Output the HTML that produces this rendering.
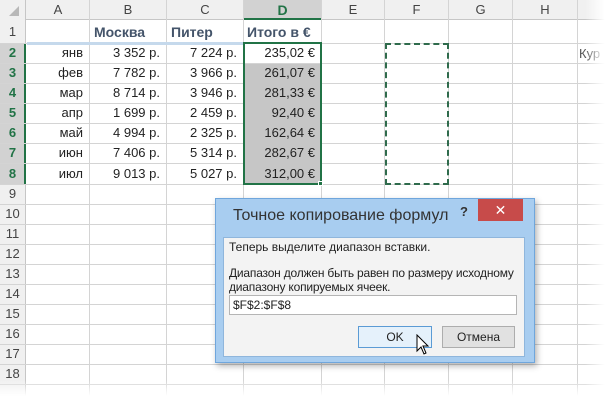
<!DOCTYPE html>
<html><head><meta charset="utf-8"><style>
*{margin:0;padding:0;box-sizing:border-box}
body{width:607px;height:400px;overflow:hidden;background:#fff;position:relative;font-family:"Liberation Sans","DejaVu Sans",sans-serif}
.a{position:absolute}
.hl{position:absolute;left:0;width:607px;height:1px;background:#d4d4d4}
.vl{position:absolute;top:0;width:1px;height:400px;background:#d4d4d4}
.ch{position:absolute;top:0;height:20px;line-height:20px;text-align:center;font-size:13px;color:#444}
.rh{position:absolute;left:0;width:25px;text-align:center;font-size:13px;color:#444;line-height:20px}
.c{position:absolute;text-align:right;font-size:13px;color:#222;line-height:20px;padding-right:6px}
.h{position:absolute;font-size:14px;font-weight:bold;color:#44546a;line-height:22px}
</style></head><body>
<div class="a" style="left:0;top:0;width:607px;height:20px;background:#f0f0f0;border-bottom:1px solid #c6c6c6"></div>
<div class="a" style="left:0;top:0;width:26px;height:400px;background:#f0f0f0;border-right:1px solid #c6c6c6"></div>
<div class="a" style="left:0;top:43px;width:26px;height:141px;background:#d2d2d2;border-right:2px solid #217346"></div>
<div class="a" style="left:243px;top:0;width:78px;height:20px;background:#d2d2d2;border-bottom:2px solid #217346"></div>
<div class="a" style="left:9px;top:6px;width:0;height:0;border-left:10px solid transparent;border-bottom:10px solid #b8b8b8"></div>
<div class="hl" style="top:43px"></div><div class="hl" style="top:63px"></div><div class="hl" style="top:83px"></div><div class="hl" style="top:103px"></div><div class="hl" style="top:123px"></div><div class="hl" style="top:143px"></div><div class="hl" style="top:163px"></div><div class="hl" style="top:184px"></div><div class="hl" style="top:204px"></div><div class="hl" style="top:224px"></div><div class="hl" style="top:244px"></div><div class="hl" style="top:264px"></div><div class="hl" style="top:284px"></div><div class="hl" style="top:304px"></div><div class="hl" style="top:324px"></div><div class="hl" style="top:344px"></div><div class="hl" style="top:364px"></div><div class="hl" style="top:384px"></div>
<div class="vl" style="left:89px"></div><div class="vl" style="left:166px"></div><div class="vl" style="left:243px"></div><div class="vl" style="left:321px"></div><div class="vl" style="left:384px"></div><div class="vl" style="left:448px"></div><div class="vl" style="left:512px"></div><div class="vl" style="left:577px"></div>
<div class="a" style="left:27px;top:42px;width:216px;height:3px;background:#c5d9ec"></div>
<div class="ch" style="left:27px;width:62px">A</div><div class="ch" style="left:90px;width:76px">B</div><div class="ch" style="left:167px;width:76px">C</div><div class="ch" style="left:244px;width:77px;color:#217346;font-weight:bold;font-size:14px">D</div><div class="ch" style="left:322px;width:62px">E</div><div class="ch" style="left:385px;width:63px">F</div><div class="ch" style="left:449px;width:63px">G</div><div class="ch" style="left:513px;width:64px">H</div>
<div class="rh" style="top:22px">1</div>
<div class="rh" style="top:43px;color:#217346;font-weight:bold">2</div><div class="rh" style="top:63px;color:#217346;font-weight:bold">3</div><div class="rh" style="top:83px;color:#217346;font-weight:bold">4</div><div class="rh" style="top:103px;color:#217346;font-weight:bold">5</div><div class="rh" style="top:123px;color:#217346;font-weight:bold">6</div><div class="rh" style="top:143px;color:#217346;font-weight:bold">7</div><div class="rh" style="top:164px;color:#217346;font-weight:bold">8</div>
<div class="rh" style="top:184px">9</div><div class="rh" style="top:204px">10</div><div class="rh" style="top:224px">11</div><div class="rh" style="top:244px">12</div><div class="rh" style="top:264px">13</div><div class="rh" style="top:284px">14</div><div class="rh" style="top:304px">15</div><div class="rh" style="top:324px">16</div><div class="rh" style="top:344px">17</div><div class="rh" style="top:364px">18</div>
<div class="h" style="left:94px;top:21px">Москва</div><div class="h" style="left:171px;top:21px">Питер</div><div class="h" style="left:247px;top:21px">Итого в €</div>
<div class="a" style="left:244px;top:64px;width:77px;height:120px;background:#c6c6c6"></div>
<div class="a" style="left:243px;top:42px;width:79px;height:143px;border:2px solid #217346"></div>
<div class="a" style="left:318px;top:181px;width:5px;height:5px;background:#217346;border:1px solid #fff"></div>
<div class="c" style="left:27px;top:43px;width:62px">янв</div><div class="c" style="left:90px;top:43px;width:76px">3 352 р.</div><div class="c" style="left:167px;top:43px;width:76px">7 224 р.</div><div class="c" style="left:244px;top:43px;width:77px">235,02 €</div>
<div class="c" style="left:27px;top:63px;width:62px">фев</div><div class="c" style="left:90px;top:63px;width:76px">7 782 р.</div><div class="c" style="left:167px;top:63px;width:76px">3 966 р.</div><div class="c" style="left:244px;top:63px;width:77px">261,07 €</div>
<div class="c" style="left:27px;top:83px;width:62px">мар</div><div class="c" style="left:90px;top:83px;width:76px">8 714 р.</div><div class="c" style="left:167px;top:83px;width:76px">3 946 р.</div><div class="c" style="left:244px;top:83px;width:77px">281,33 €</div>
<div class="c" style="left:27px;top:103px;width:62px">апр</div><div class="c" style="left:90px;top:103px;width:76px">1 699 р.</div><div class="c" style="left:167px;top:103px;width:76px">2 459 р.</div><div class="c" style="left:244px;top:103px;width:77px">92,40 €</div>
<div class="c" style="left:27px;top:123px;width:62px">май</div><div class="c" style="left:90px;top:123px;width:76px">4 994 р.</div><div class="c" style="left:167px;top:123px;width:76px">2 325 р.</div><div class="c" style="left:244px;top:123px;width:77px">162,64 €</div>
<div class="c" style="left:27px;top:143px;width:62px">июн</div><div class="c" style="left:90px;top:143px;width:76px">7 406 р.</div><div class="c" style="left:167px;top:143px;width:76px">5 314 р.</div><div class="c" style="left:244px;top:143px;width:77px">282,67 €</div>
<div class="c" style="left:27px;top:164px;width:62px">июл</div><div class="c" style="left:90px;top:164px;width:76px">9 013 р.</div><div class="c" style="left:167px;top:164px;width:76px">5 027 р.</div><div class="c" style="left:244px;top:164px;width:77px">312,00 €</div>
<div class="a" style="left:579px;top:44px;font-size:13px;color:#555;line-height:20px">Кур</div>
<div class="a" style="left:385px;top:43px;width:64px;height:142px;border:2px dashed #2f6b4c"></div>
<div class="a" style="left:585px;top:0;width:22px;height:400px;background:linear-gradient(to right,rgba(255,255,255,0),#fff 90%)"></div>
<div class="a" style="left:0;top:380px;width:607px;height:20px;background:linear-gradient(rgba(255,255,255,0),#fff 80%)"></div>
<div class="a" style="left:215px;top:198px;width:320px;height:165px;background:#a8cdf0;border:1px solid #6fa6dc;box-shadow:2px 3px 6px rgba(0,0,0,.3)"></div>
<div class="a" style="left:233px;top:205px;font-size:16px;color:#333;line-height:22px">Точное копирование формул</div>
<div class="a" style="left:460px;top:204px;font-size:13px;font-weight:bold;color:#333">?</div>
<div class="a" style="left:478px;top:199px;width:45px;height:22px;background:#c74b4a;color:#fff;text-align:center;font-size:14px;line-height:22px">✕</div>
<div class="a" style="left:223px;top:237px;width:302px;height:120px;background:#f3f3f3;border:1px solid #8fb6dc"></div>
<div class="a" style="left:229px;top:240px;font-size:12px;color:#222;line-height:14px">Теперь выделите диапазон вставки.</div>
<div class="a" style="left:229px;top:266px;font-size:12px;color:#222;line-height:14px;letter-spacing:-0.2px">Диапазон должен быть равен по размеру исходному<br>диапазону копируемых ячеек.</div>
<div class="a" style="left:229px;top:295px;width:288px;height:20px;background:#fff;border:1px solid #b5b5b5;font-size:12px;line-height:18px;padding-left:3px;color:#222">$F$2:$F$8</div>
<div class="a" style="left:358px;top:326px;width:74px;height:22px;background:#e5f1fb;border:1px solid #5b9bd5;text-align:center;font-size:12px;line-height:20px;color:#222">OK</div>
<div class="a" style="left:442px;top:326px;width:73px;height:22px;background:#e1e1e1;border:1px solid #adadad;text-align:center;font-size:12px;line-height:20px;color:#222">Отмена</div>
<svg class="a" style="left:416px;top:334px" width="14" height="22" viewBox="0 0 14 22"><path d="M1 1 L1 17 L5 13 L8 20 L10 19 L7 12 L12 12 Z" fill="#fff" stroke="#000" stroke-width="1"/></svg>
</body></html>
